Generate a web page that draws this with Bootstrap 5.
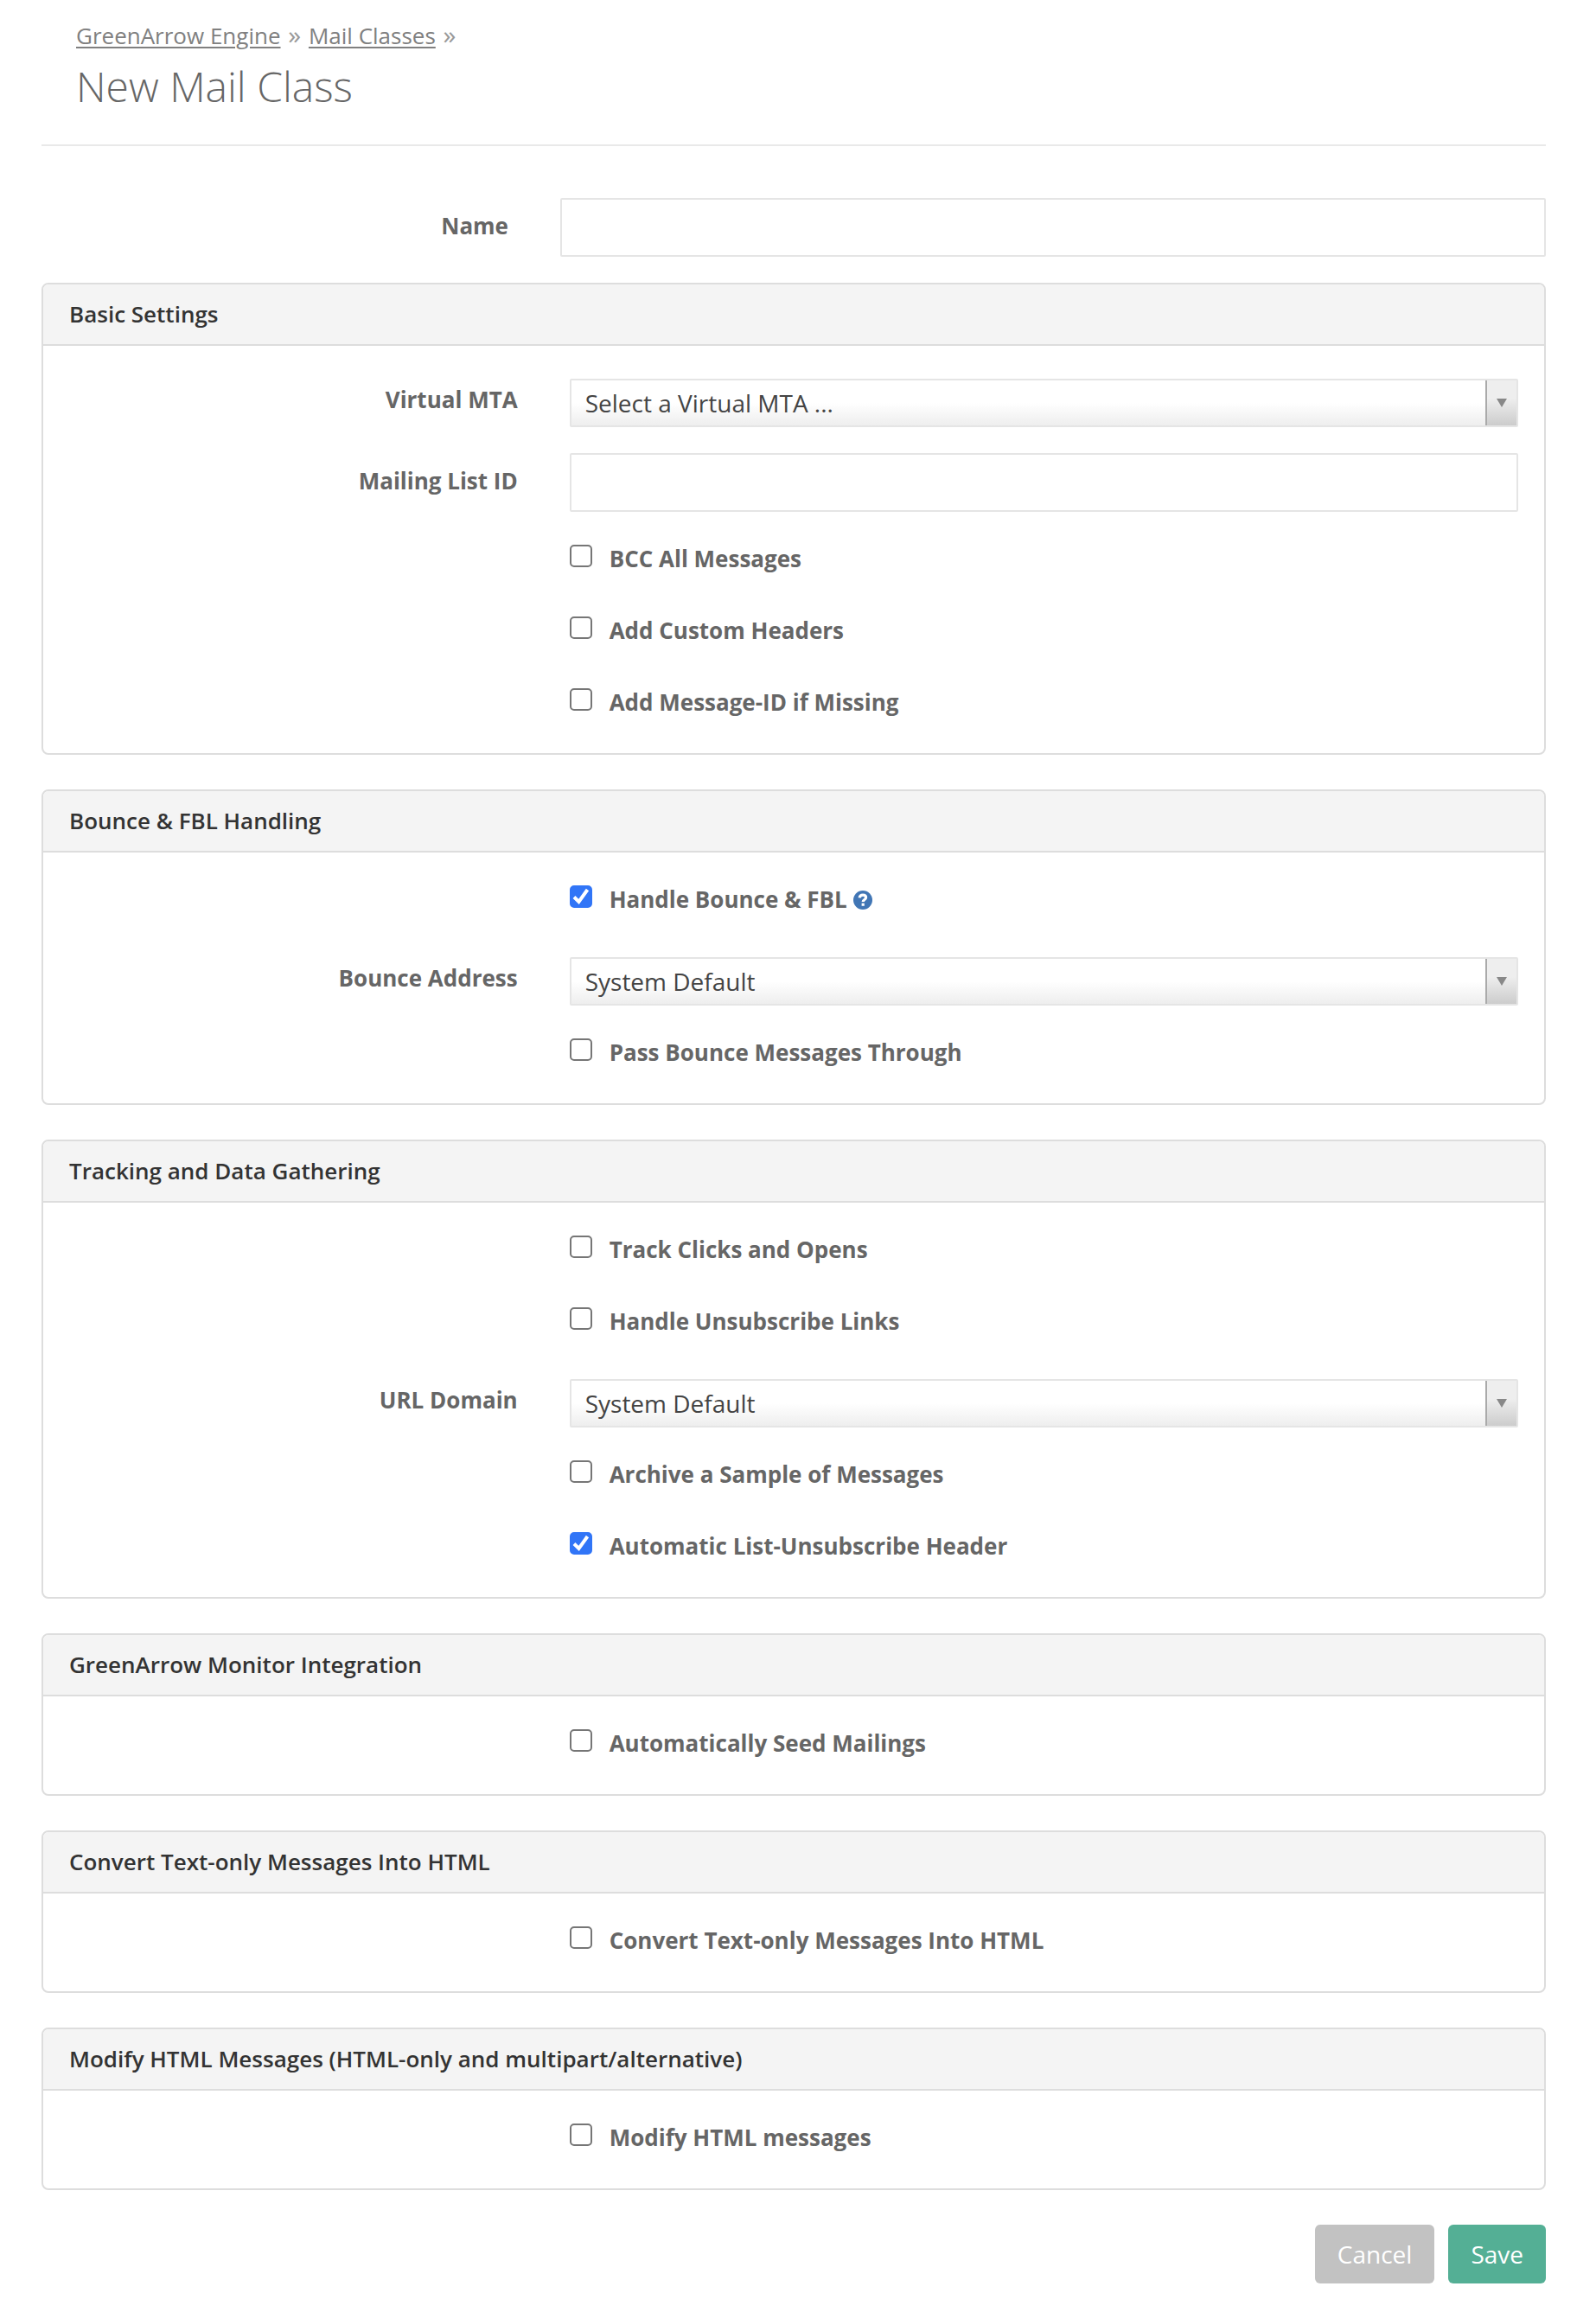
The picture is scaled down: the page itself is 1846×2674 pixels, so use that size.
<!DOCTYPE html>
<html lang="en">
<head>
<meta charset="utf-8">
<meta name="viewport" content="width=device-width, initial-scale=1">
<title>New Mail Class</title>
<link rel="stylesheet" href="https://cdn.jsdelivr.net/npm/bootstrap@5.3.0/dist/css/bootstrap.min.css">
<style>
  body { font-family: "Open Sans", sans-serif; font-size: 26px; line-height: 39px; color: #666; background: #fff; }
  .page { padding: 22px 58px 33px 48px; }
  .page-head { padding: 0 40px 41px; border-bottom: 2px solid #e9e9e9; margin-bottom: 60px; }
  .crumbs { color: #999; }
  .crumbs a { color: #808080; text-decoration: underline; text-decoration-thickness: 2px; text-underline-offset: 3px; }
  .crumb-sep { font-size: 30px; line-height: 1; margin: 0 2px; }
  .page-title { font-size: 48px; line-height: 53px; font-weight: 300; color: #666; margin: 12px 0 0; }

  .field-row { --bs-gutter-x: 60px; margin-bottom: 30px; }
  .field-label { padding-top: 13px; font-weight: 700; color: #666; text-align: right; }
  .field-input { height: 68px; border: 2px solid #e5e5e5; border-radius: 2px; padding: 0 24px; font-size: 28px; color: #444; }

  .panel { border: 2px solid #ddd; border-radius: 8px; margin-bottom: 40px; }
  .panel-title { background: #f4f4f4; border-bottom: 2px solid #ddd; border-radius: 6px 6px 0 0; padding: 20px 30px; font-size: 26px; line-height: 29px; font-weight: 600; color: #333; margin: 0; }
  .panel-content { padding: 30px 30px 0; }

  .select-wrap { padding-top: 8px; }
  .field-select {
    height: 56px; padding: 0 54px 0 16px; border: 2px solid #e5e5e5; border-radius: 2px;
    font-size: 28px; line-height: 38px; color: #444;
    background-color: #fff;
    background-image:
      url("data:image/svg+xml,%3Csvg xmlns='http://www.w3.org/2000/svg' viewBox='0 0 12 10'%3E%3Cpath d='M0 0h12L6 10z' fill='%23888'/%3E%3C/svg%3E"),
      linear-gradient(#aaa, #aaa),
      linear-gradient(to top, #ccc 0%, #eee 60%),
      linear-gradient(to top, #eee 0%, #fff 50%);
    background-repeat: no-repeat;
    background-position: right 11px top 21px, right 34px top, right top, left top;
    background-size: 12px 10px, 2px 100%, 34px 100%, 100% 100%;
  }

  .tick-row { min-height: 53px; display: flex; align-items: flex-start; gap: 20px; padding-top: 5px; }
  .tick-row .form-check-input { flex: none; width: 26px; height: 26px; margin: 3px 0 0; border: 2px solid #767676; border-radius: 5px; background-color: #fff; }
  .tick-row .form-check-input:checked {
    border-color: #3175f7; background-color: #3175f7; background-size: 26px 26px; background-origin: border-box;
    background-image: url("data:image/svg+xml,%3Csvg xmlns='http://www.w3.org/2000/svg' viewBox='0 0 26 26'%3E%3Cpath d='M5 13.500l5.500 5.500L20.500 5' fill='none' stroke='%23fff' stroke-width='4'/%3E%3C/svg%3E");
  }
  .tick-row label { font-weight: 700; color: #666; }
  .help { width: 22px; height: 22px; display: block; }
  .help-link { margin: 9px 0 0 -13px; }

  .action { height: 68px; padding: 0 26px; border: 0; border-radius: 6px; font-size: 28px; line-height: 38px; color: #fff; }
  .action-cancel, .action-cancel:hover { background: #c2c2c2; color: #fff; }
  .action-save, .action-save:hover { background: #54af95; color: #fff; }
</style>
<script src="https://cdn.jsdelivr.net/npm/bootstrap@5.3.0/dist/js/bootstrap.bundle.min.js"></script>
</head>
<body>
<main class="page">
  <header class="page-head">
    <nav class="crumbs" aria-label="Breadcrumb"><a href="#">GreenArrow Engine</a> <span class="crumb-sep">»</span> <a href="#">Mail Classes</a> <span class="crumb-sep">»</span></nav>
    <h1 class="page-title">New Mail Class</h1>
  </header>

  <form>
    <div class="row field-row">
      <label class="col-4 field-label" for="name">Name</label>
      <div class="col-8"><input class="form-control field-input" type="text" id="name"></div>
    </div>

    <section class="panel">
      <h2 class="panel-title">Basic Settings</h2>
      <div class="panel-content">
        <div class="row field-row">
          <label class="col-4 field-label" for="vmta">Virtual MTA</label>
          <div class="col-8 select-wrap"><select class="form-select field-select" id="vmta"><option>Select a Virtual MTA ...</option></select></div>
        </div>
        <div class="row field-row">
          <label class="col-4 field-label" for="listid">Mailing List ID</label>
          <div class="col-8"><input class="form-control field-input" type="text" id="listid"></div>
        </div>
        <div class="row field-row"><div class="col-8 offset-4"><div class="tick-row"><input class="form-check-input" type="checkbox" id="bcc"><label for="bcc">BCC All Messages</label></div></div></div>
        <div class="row field-row"><div class="col-8 offset-4"><div class="tick-row"><input class="form-check-input" type="checkbox" id="headers"><label for="headers">Add Custom Headers</label></div></div></div>
        <div class="row field-row"><div class="col-8 offset-4"><div class="tick-row"><input class="form-check-input" type="checkbox" id="msgid"><label for="msgid">Add Message-ID if Missing</label></div></div></div>
      </div>
    </section>

    <section class="panel">
      <h2 class="panel-title">Bounce &amp; FBL Handling</h2>
      <div class="panel-content">
        <div class="row field-row"><div class="col-8 offset-4"><div class="tick-row"><input class="form-check-input" type="checkbox" id="fbl" checked><label for="fbl">Handle Bounce &amp; FBL</label>
          <a class="help-link" href="#" aria-label="Help"><svg class="help" viewBox="0 0 22 22"><circle cx="11" cy="11" r="11" fill="#4176b5"/><path d="M7.200 8.400C7.500 6 9 5.200 11 5.200s3.600 1.100 3.600 2.900c0 2.500-3.400 2.300-3.400 5" fill="none" stroke="#fff" stroke-width="3.200"/><path d="M9.600 14.600h3.200v3.200h-3.200z" fill="#fff"/></svg></a>
        </div></div></div>
        <div class="row field-row">
          <label class="col-4 field-label" for="bounce">Bounce Address</label>
          <div class="col-8 select-wrap"><select class="form-select field-select" id="bounce"><option>System Default</option></select></div>
        </div>
        <div class="row field-row"><div class="col-8 offset-4"><div class="tick-row"><input class="form-check-input" type="checkbox" id="pass"><label for="pass">Pass Bounce Messages Through</label></div></div></div>
      </div>
    </section>

    <section class="panel">
      <h2 class="panel-title">Tracking and Data Gathering</h2>
      <div class="panel-content">
        <div class="row field-row"><div class="col-8 offset-4"><div class="tick-row"><input class="form-check-input" type="checkbox" id="track"><label for="track">Track Clicks and Opens</label></div></div></div>
        <div class="row field-row"><div class="col-8 offset-4"><div class="tick-row"><input class="form-check-input" type="checkbox" id="unsub"><label for="unsub">Handle Unsubscribe Links</label></div></div></div>
        <div class="row field-row">
          <label class="col-4 field-label" for="domain">URL Domain</label>
          <div class="col-8 select-wrap"><select class="form-select field-select" id="domain"><option>System Default</option></select></div>
        </div>
        <div class="row field-row"><div class="col-8 offset-4"><div class="tick-row"><input class="form-check-input" type="checkbox" id="archive"><label for="archive">Archive a Sample of Messages</label></div></div></div>
        <div class="row field-row"><div class="col-8 offset-4"><div class="tick-row"><input class="form-check-input" type="checkbox" id="autounsub" checked><label for="autounsub">Automatic List-Unsubscribe Header</label></div></div></div>
      </div>
    </section>

    <section class="panel">
      <h2 class="panel-title">GreenArrow Monitor Integration</h2>
      <div class="panel-content">
        <div class="row field-row"><div class="col-8 offset-4"><div class="tick-row"><input class="form-check-input" type="checkbox" id="seed"><label for="seed">Automatically Seed Mailings</label></div></div></div>
      </div>
    </section>

    <section class="panel">
      <h2 class="panel-title">Convert Text-only Messages Into HTML</h2>
      <div class="panel-content">
        <div class="row field-row"><div class="col-8 offset-4"><div class="tick-row"><input class="form-check-input" type="checkbox" id="convert"><label for="convert">Convert Text-only Messages Into HTML</label></div></div></div>
      </div>
    </section>

    <section class="panel">
      <h2 class="panel-title">Modify HTML Messages (HTML-only and multipart/alternative)</h2>
      <div class="panel-content">
        <div class="row field-row"><div class="col-8 offset-4"><div class="tick-row"><input class="form-check-input" type="checkbox" id="modify"><label for="modify">Modify HTML messages</label></div></div></div>
      </div>
    </section>

    <div class="d-flex justify-content-end gap-3">
      <button class="btn action action-cancel" type="button">Cancel</button>
      <button class="btn action action-save" type="submit">Save</button>
    </div>
  </form>
</main>
</body>
</html>
